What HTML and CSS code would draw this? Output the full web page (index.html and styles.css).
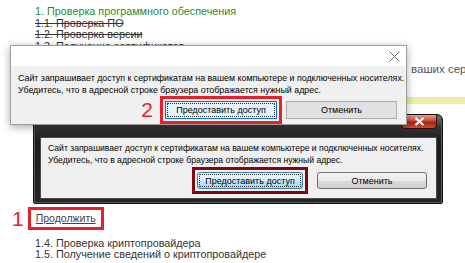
FILE: index.html
```html
<!DOCTYPE html>
<html lang="ru">
<head>
  <meta charset="UTF-8" />
  <title>Проверка программного обеспечения</title>
  <link rel="stylesheet" href="styles.css">
</head>
<body>

  <div class="page">
    <ul class="steps">
      <li class="active">1. Проверка программного обеспечения</li>
      <li class="done">1.1. Проверка ПО</li>
      <li class="done">1.2. Проверка версии</li>
      <li class="done">1.3. Получение сертификатов</li>
    </ul>

    <p class="note">ваших серти</p>
    <div class="hint"></div>

    <div class="continue">
      <span class="num">1</span>
      <a href="#" class="mark-link">Продолжить</a>
    </div>

    <ul class="steps rest">
      <li>1.4. Проверка криптопровайдера</li>
      <li>1.5. Получение сведений о криптопровайдере</li>
    </ul>
  </div>

  <!-- windows 7 dialog (behind) -->
  <div class="dialog win7">
    <div class="win7-title">
      <span class="win7-close">
        <svg width="11" height="9" viewBox="0 0 11 9"><path d="M1.5 1 L9.5 8 M9.5 1 L1.5 8" stroke="#fff" stroke-width="2.2"/></svg>
      </span>
    </div>
    <div class="win7-body">
      <p>Сайт запрашивает доступ к сертификатам на вашем компьютере и подключенных носителях.<br>
      Убедитесь, что в адресной строке браузера отображается нужный адрес.</p>
      <div class="buttons">
        <span class="mark dark"><button class="btn7 focus">Предоставить доступ</button></span>
        <button class="btn7">Отменить</button>
      </div>
    </div>
  </div>

  <!-- windows 10 dialog (front) -->
  <div class="dialog win10">
    <div class="win10-title">
      <svg width="11" height="11" viewBox="0 0 11 11"><path d="M0.5 0.5 L10.5 10.5 M10.5 0.5 L0.5 10.5" stroke="#6a6a6a" stroke-width="1"/></svg>
    </div>
    <div class="win10-body">
      <p>Сайт запрашивает доступ к сертификатам на вашем компьютере и подключенных носителях.<br>
      Убедитесь, что в адресной строке браузера отображается нужный адрес.</p>
      <div class="buttons">
        <span class="num">2</span>
        <span class="mark"><button class="btn10 focus">Предоставить доступ</button></span>
        <button class="btn10">Отменить</button>
      </div>
    </div>
  </div>

</body>
</html>
```

FILE: styles.css
```css
:root {
  --green: #2b8a2b;
  --text: #333333;
  --red: #e8202a;
  --dark-red: #7d0a10;
}

* {
  box-sizing: border-box;
}

body {
  margin: 0;
  width: 465px;
  height: 263px;
  overflow: hidden;
  background: #ffffff;
  font-family: 'Liberation Sans', Arial, sans-serif;
  color: var(--text);
  position: relative;
}

.page {
  padding-top: 6px;
  overflow: hidden;
}

.steps {
  list-style: none;
  margin: 0;
  padding: 0 0 0 35px;
  font-size: 10.8px;
  line-height: 11.5px;
}

.steps .active {
  color: var(--green);
}

.steps .done {
  text-decoration: line-through;
}

.note {
  margin: 11px 0 0;
  padding-left: 411px;
  white-space: nowrap;
  font-size: 11.5px;
  color: #555;
}

.hint {
  margin: 22px 0 0 35px;
  height: 7px;
  background: #eeeea6;
}

.continue {
  display: flex;
  align-items: center;
  gap: 4px;
  margin-top: 103px;
  padding-left: 12px;
}

.num {
  color: var(--red);
  font-size: 21px;
  line-height: 18px;
}

.mark-link {
  border: 3px solid var(--red);
  padding: 2px 5px 3px;
  font-size: 10.5px;
  color: #444;
  text-decoration: underline;
}

.rest {
  margin-top: 8px;
  line-height: 11px;
}

/* dialogs */
.dialog {
  position: absolute;
  color: #000;
}

.dialog p {
  margin: 0;
  line-height: 12px;
  white-space: nowrap;
}

.win10 p {
  font-size: 8.85px;
}

.win7 p {
  font-size: 8.6px;
}

.buttons {
  display: flex;
  justify-content: flex-end;
  align-items: center;
}

.mark {
  border: 3px solid var(--red);
  padding: 2px;
  margin-right: 4px;
}

.mark.dark {
  border-color: var(--dark-red);
  margin-right: 9px;
}

button {
  font-family: inherit;
  font-size: 9px;
  color: #000;
  padding: 0;
  display: block;
}

/* windows 10 */
.win10 {
  left: 10px;
  top: 45px;
  width: 397px;
  height: 80px;
  background: #f0f0f0;
  border: 1px solid #9c9c9c;
  box-shadow: 0 2px 8px rgba(0,0,0,0.35);
}

.win10-title {
  height: 20px;
  background: #ffffff;
  display: flex;
  justify-content: flex-end;
  align-items: center;
  padding-right: 6px;
}

.win10-body {
  padding: 6px 9px 0 7px;
}

.win10 .num {
  margin-right: 7px;
}

.btn10 {
  height: 18px;
  width: 111px;
  background: #e1e1e1;
  border: 1px solid #adadad;
}

.btn10.focus {
  width: 112px;
  background: #e5f1fb;
  border-color: #0078d7;
  outline: 1px dotted #333;
  outline-offset: -3px;
}

/* windows 7 */
.win7 {
  left: 33px;
  top: 114px;
  width: 410px;
  height: 90px;
  border: 1px solid #111;
  border-radius: 6px 6px 2px 2px;
  background: linear-gradient(to bottom, #777 0%, #333 14%, #1c1c1c 30%, #262626 100%);
  box-shadow: inset 0 0 0 1px #5a5a5a;
  padding: 0 5px 5px 6px;
}

.win7-title {
  height: 22px;
  display: flex;
  justify-content: flex-end;
  align-items: flex-start;
}

.win7-close {
  width: 36px;
  height: 14px;
  display: flex;
  align-items: center;
  justify-content: center;
  border: 1px solid #3a0a0a;
  border-top: none;
  border-radius: 0 0 4px 4px;
  background: linear-gradient(to bottom, #e8a090 0%, #c74a38 45%, #a8220e 55%, #c85030 100%);
}

.win7-body {
  background: #f0f0f0;
  border: 1px solid #4a4a4a;
  height: 62px;
  padding: 4px 9px 0 7px;
}

.win7 .buttons {
  margin-top: 1px;
}

.btn7 {
  height: 17px;
  width: 110px;
  border: 1px solid #707070;
  border-radius: 3px;
  background: linear-gradient(to bottom, #f2f2f2 0%, #ebebeb 50%, #dddddd 51%, #cfcfcf 100%);
}

.btn7.focus {
  width: 106px;
  border-color: #3c7fb1;
  background: linear-gradient(to bottom, #eaf6fd 0%, #d9f0fc 50%, #bee6fd 51%, #a7d9f5 100%);
  outline: 1px dotted #333;
  outline-offset: -3px;
}
```
